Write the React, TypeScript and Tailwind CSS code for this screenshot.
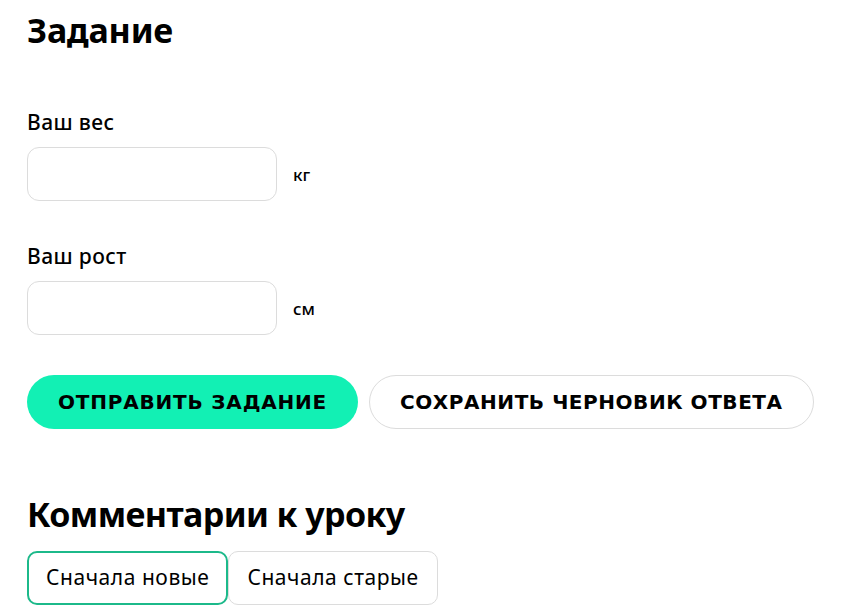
import React from 'react';

const font = { fontFamily: '"Noto Sans", "Liberation Sans", sans-serif' };
const wide = { fontFamily: '"DejaVu Sans", "Noto Sans", sans-serif' };

function Field({ label, unit }: { label: string; unit: string }) {
  return (
    <div>
      <label className="block text-[21px] leading-[24px] font-medium tracking-[0.4px] text-black">{label}</label>
      <div className="mt-[13px] flex items-center">
        <input
          type="text"
          className="h-[54px] w-[250px] rounded-[12px] border border-[#dcdcdc] bg-white px-4 text-[18px] outline-none"
        />
        <span className="ml-[16px] mt-[2px] text-[17px] font-medium text-black">{unit}</span>
      </div>
    </div>
  );
}

export default function App() {
  return (
    <div className="min-h-screen bg-white pl-[27px] pt-[10px] text-black" style={font}>
      <h2 className="text-[34px] leading-[40px] font-bold tracking-[-0.2px]">Задание</h2>

      <div className="mt-[60px] flex flex-col gap-[43px]">
        <Field label="Ваш вес" unit="кг" />
        <Field label="Ваш рост" unit="см" />
      </div>

      <div className="mt-[40px] flex gap-[11px]" style={wide}>
        <button className="h-[54px] rounded-full bg-[#12f0b4] px-[31px] text-[20px] font-bold uppercase tracking-[0.8px]">
          Отправить задание
        </button>
        <button className="h-[54px] rounded-full border border-[#dcdcdc] bg-white px-[30px] text-[20px] font-bold uppercase tracking-[0.55px]">
          Сохранить черновик ответа
        </button>
      </div>

      <h2 className="mt-[65px] text-[34px] leading-[40px] font-bold tracking-[-0.6px]">Комментарии к уроку</h2>

      <div className="mt-[17px] flex">
        <button className="h-[54px] rounded-[10px] border-2 border-[#1cb98a] px-[17px] text-[21px] tracking-[0.55px]">
          Сначала новые
        </button>
        <button className="h-[54px] rounded-[10px] border border-[#dcdcdc] px-[18px] text-[21px] tracking-[0.55px]">
          Сначала старые
        </button>
      </div>
    </div>
  );
}
